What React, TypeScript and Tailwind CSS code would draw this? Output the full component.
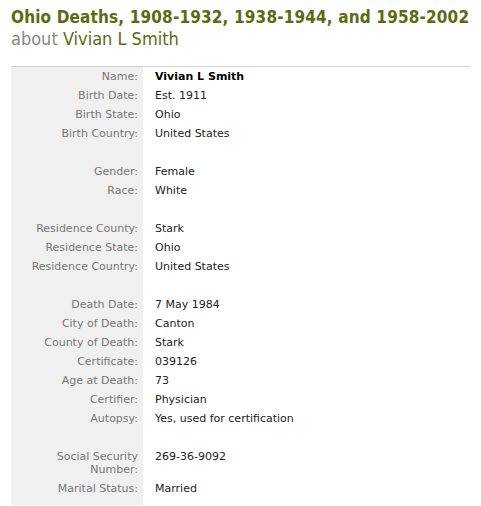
const rows: ([string, string] | null)[] = [
  ['Name:', 'Vivian L Smith'],
  ['Birth Date:', 'Est. 1911'],
  ['Birth State:', 'Ohio'],
  ['Birth Country:', 'United States'],
  null,
  ['Gender:', 'Female'],
  ['Race:', 'White'],
  null,
  ['Residence County:', 'Stark'],
  ['Residence State:', 'Ohio'],
  ['Residence Country:', 'United States'],
  null,
  ['Death Date:', '7 May 1984'],
  ['City of Death:', 'Canton'],
  ['County of Death:', 'Stark'],
  ['Certificate:', '039126'],
  ['Age at Death:', '73'],
  ['Certifier:', 'Physician'],
  ['Autopsy:', 'Yes, used for certification'],
  null,
  ['Social Security Number:', '269-36-9092'],
  ['Marital Status:', 'Married'],
];

export default function App() {
  return (
    <div className="min-h-screen bg-white px-[11px] pt-[6px]">
      {/* Title */}
      <h1 className="whitespace-nowrap font-['DejaVu_Sans_Condensed','DejaVu_Sans',sans-serif] text-[17px] leading-[22px] font-bold tracking-[0.15px] text-[#5b6b12]">
        Ohio Deaths, 1908-1932, 1938-1944, and 1958-2002
      </h1>
      <p className="font-['DejaVu_Sans_Condensed','DejaVu_Sans',sans-serif] text-[18px] leading-[22px] text-[#888]">
        about <span className="text-[#5b6b12]">Vivian L Smith</span>
      </p>

      {/* Record table */}
      <table className="mt-[16px] w-[459px] border-t border-[#d4d4d4] font-['DejaVu_Sans',sans-serif] text-[11px] leading-[13px]">
        <tbody>
          {rows.map((row, i) => {
            const last = i === rows.length - 1;
            return row ? (
              <tr key={i}>
                <td
                  className={`w-[132px] bg-[#f0f0f0] pt-[3px] pr-[5px] text-right align-top text-[#777] ${
                    last ? 'pb-[10px]' : 'pb-[3px]'
                  }`}
                >
                  {row[0] === 'Social Security Number:' ? (
                    <>
                      Social Security
                      <br />
                      Number:
                    </>
                  ) : (
                    row[0]
                  )}
                </td>
                <td
                  className={`py-[3px] pl-[12px] align-top text-[#222] ${
                    i === 0 ? 'font-bold text-black' : ''
                  }`}
                >
                  {row[1]}
                </td>
              </tr>
            ) : (
              <tr key={i}>
                <td className="h-[19px] bg-[#f0f0f0]" />
                <td />
              </tr>
            );
          })}
        </tbody>
      </table>
    </div>
  );
}
